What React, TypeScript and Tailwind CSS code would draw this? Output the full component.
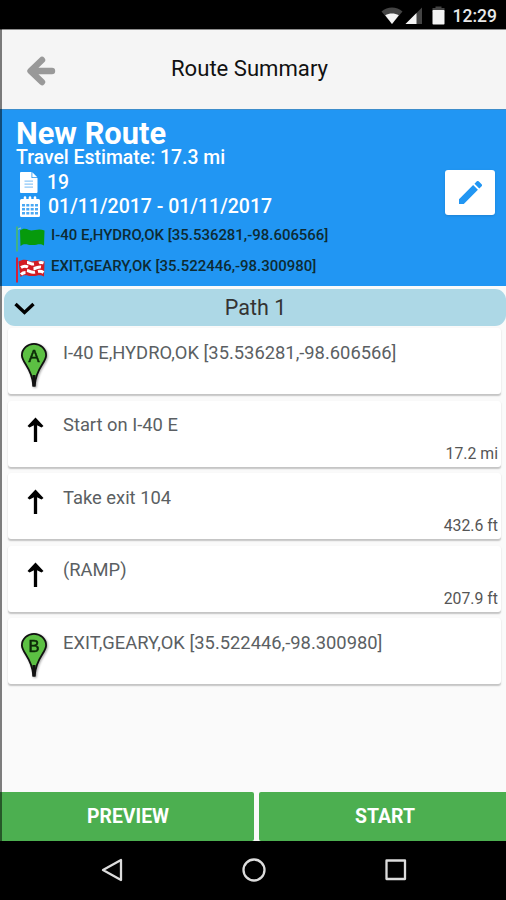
import React from 'react';

interface Step {
  kind: 'marker' | 'straight';
  label?: string;
  text: string;
  distance?: string;
}

const steps: Step[] = [
  { kind: 'marker', label: 'A', text: 'I-40 E,HYDRO,OK [35.536281,-98.606566]' },
  { kind: 'straight', text: 'Start on I-40 E', distance: '17.2 mi' },
  { kind: 'straight', text: 'Take exit 104', distance: '432.6 ft' },
  { kind: 'straight', text: '(RAMP)', distance: '207.9 ft' },
  { kind: 'marker', label: 'B', text: 'EXIT,GEARY,OK [35.522446,-98.300980]' },
];

const StatusBar: React.FC = () => (
  <div className="flex h-[29px] shrink-0 items-center justify-end bg-black pr-[9px] text-[#e8e8e8]">
    <svg className="mt-[2px] h-[18px] w-[22px]" viewBox="0 0 22 18">
      <path d="M0.5 4.5C6.5-0.8 15.5-0.8 21.5 4.5L11 17Z" fill="#444" />
      <path d="M4.2 8.2C8.4 5.8 13.6 5.8 17.8 8.2L11 17Z" fill="#f4f4f4" />
    </svg>
    <svg className="ml-[2px] mt-[2px] h-[18px] w-[18px]" viewBox="0 0 18 18">
      <path d="M17 0.5V17H0.5Z" fill="#444" />
      <path d="M11.5 6V17H0.5Z" fill="#f4f4f4" />
    </svg>
    <svg className="ml-[9px] mt-[2px] h-[19px] w-[13px]" viewBox="0 0 13 19">
      <path d="M3.5 0.5h6v1.5H12.5V6H0.5V2h3Z" fill="#444" />
      <rect x="0.5" y="4" width="12" height="14.5" rx="0.8" fill="#f4f4f4" />
    </svg>
    <span className="ml-[8px] mt-[4px] text-[17.5px] leading-none font-medium">12:29</span>
  </div>
);

const Header: React.FC = () => (
  <header className="grid h-[80px] shrink-0 grid-cols-[171px_1fr] items-center border-t border-[#8d8d8d] bg-[#f5f5f5]">
    <svg className="ml-[26px] mt-[2px] h-[30px] w-[30px]" viewBox="0 0 30 30" fill="none" stroke="#999999" strokeWidth="6.4" strokeLinecap="round" strokeLinejoin="round">
      <path d="M16 4L4.5 15L16 26M6 15H26" />
    </svg>
    <h1 className="-mt-[2px] text-[22.1px] leading-none font-normal text-[#111]">Route Summary</h1>
  </header>
);

const PageIcon: React.FC = () => (
  <svg className="h-[21px] w-[18px]" viewBox="0 0 18 21">
    <path d="M1 0h10.5v6h6V20a1 1 0 0 1-1 1H1a1 1 0 0 1-1-1V1a1 1 0 0 1 1-1Z" fill="white" />
    <path d="M12.3 0.3L17.3 5.3H12.3Z" fill="white" />
    <path d="M4.5 9.2h8.5M4.5 12.2h8.5M4.5 15.2h8.5" stroke="#8dc7f8" strokeWidth="1.3" />
  </svg>
);

const CalendarIcon: React.FC = () => (
  <svg className="h-[21px] w-[20px]" viewBox="0 0 20 21">
    <path d="M1.5 3h2.2V1.5a1.3 1.3 0 0 1 2.6 0V3h2.4V1.5a1.3 1.3 0 0 1 2.6 0V3h2.4V1.5a1.3 1.3 0 0 1 2.6 0V3h2.2a1.5 1.5 0 0 1 1.5 1.5V19.5a1.5 1.5 0 0 1-1.5 1.5H1.5A1.5 1.5 0 0 1 0 19.5V4.5A1.5 1.5 0 0 1 1.5 3Z" fill="white" />
    <g fill="#4aa8f3">
      <path d="M2 8h3v2.6H2ZM6.3 8h3v2.6h-3ZM10.700 8h3v2.600h-3ZM15 8h3v2.600h-3Z" />
      <path d="M2 12h3v2.600H2ZM6.300 12h3v2.600h-3ZM10.700 12h3v2.600h-3ZM15 12h3v2.600h-3Z" />
      <path d="M2 16h3v2.600H2ZM6.300 16h3v2.600h-3ZM10.700 16h3v2.600h-3ZM15 16h3v2.600h-3Z" />
    </g>
  </svg>
);

const StartFlag: React.FC = () => (
  <svg className="h-[28px] w-[31px]" viewBox="0 0 31 28">
    <path d="M1 1.5V26.5" stroke="#49b96b" strokeWidth="1.6" />
    <path d="M2 4.5C3 3.5 4 3 5 3.200" stroke="#b9e3a8" strokeWidth="1" fill="none" />
    <path d="M4 5.500C7 3 10 3.500 13 5C17 6.500 22 3 28.500 5.500L28 20.500C24 18 21 20 17 20C12 20.500 9 17.500 4.500 21Z" fill="#069a0c" />
  </svg>
);

const FinishFlag: React.FC = () => (
  <svg className="h-[28px] w-[31px]" viewBox="0 0 31 28">
    <path d="M1 1.5V26.5" stroke="#d4203a" strokeWidth="2" />
    <path d="M2.5 5.500C7 3 10 3.500 13 5C17 6.500 22 3 28.500 5.500L28 20.500C24 18 21 20 17 20C12 20.500 9 17.500 4.500 21Z" fill="#d21c24" />
    <g fill="none" stroke="white" strokeWidth="3">
      <path d="M11 6.500C14 6.500 15 8.500 18 8" />
      <path d="M23 7C25 6 26 6.500 27.500 7" />
      <path d="M5 11.500C8 9.500 10 10 12 11" />
      <path d="M17.500 12.500C20 12.500 22 10.500 25 11" />
      <path d="M11 14.500C14 15 15 17 19 16" />
      <path d="M5 18.500C7 16.500 8 16.500 9.500 16.500" />
      <path d="M22 15.500C24 15 26 15.500 27.500 16.500" />
    </g>
  </svg>
);

const Marker: React.FC<{ label: string }> = ({ label }) => (
  <svg className="mt-[14px] h-[46px] w-[30px] drop-shadow-[1px_1px_1px_rgba(0,0,0,0.35)]" viewBox="0 0 30 46">
    <path d="M15 1.800C8.500 1.800 2.900 6.700 2.900 13.300C2.900 21 13 25.500 14.300 43.500H15.700C17 25.500 27.100 21 27.100 13.300C27.100 6.700 21.500 1.800 15 1.800Z" fill="#5cc043" stroke="#111" strokeWidth="1.800" />
    <path d="M15 33V44.500" stroke="#111" strokeWidth="3" />
    <text x="15" y="19.500" textAnchor="middle" fontSize="16.500" fill="#0c2a08" stroke="#0c2a08" strokeWidth="0.600" fontFamily="'Liberation Sans', sans-serif">{label}</text>
  </svg>
);

const StraightArrow: React.FC = () => (
  <svg className="mt-[16px] ml-[8px] h-[26px] w-[18px]" viewBox="0 0 18 26">
    <path d="M8.500 25V3" stroke="#000" strokeWidth="3.300" />
    <path d="M8.500 0.500L16.500 9L14.500 10.500L8.500 7.500L2.500 10.500L0.500 9Z" fill="#000" />
  </svg>
);

const RouteInfo: React.FC = () => (
  <section className="flex h-[177px] shrink-0 flex-col border-t border-[#3d8dcb] bg-[#2196f3] pl-[16px] text-white">
    <div className="flex h-[108px]">
      <div className="flex-1 pt-[8px]">
        <h2 className="text-[30.8px] leading-[31px] font-bold">New Route</h2>
        <p className="-mt-[1px] text-[19.4px] leading-[20px] font-medium">Travel Estimate: 17.3 mi</p>
        <div className="ml-[4px] mt-[2px] flex h-[24px] items-center text-[19.4px] font-medium">
          <PageIcon />
          <span className="mt-[1px] ml-[9px]">19</span>
        </div>
        <div className="ml-[4px] flex h-[25px] items-center text-[19.5px] font-medium">
          <CalendarIcon />
          <span className="mt-[1px] ml-[8px]">01/11/2017 - 01/11/2017</span>
        </div>
      </div>
      <button className="mt-[60px] mr-[11px] flex h-[45px] w-[50px] items-center justify-center rounded-[3px] bg-white shadow-sm">
        <svg className="h-[23px] w-[23px]" viewBox="3 3 18 18" fill="#2196f3">
          <path d="M3 17.25V21h3.75L17.81 9.94l-3.75-3.75L3 17.25ZM20.71 7.04a1 1 0 0 0 0-1.41l-2.34-2.34a1 1 0 0 0-1.41 0l-1.83 1.83 3.75 3.75 1.83-1.83Z" />
        </svg>
      </button>
    </div>
    <div className="mt-[7px] flex h-[31px] items-start text-[14.95px] leading-[21px] font-medium text-[#0d2b33]">
      <StartFlag />
      <span className="ml-[4px]">I-40 E,HYDRO,OK [35.536281,-98.606566]</span>
    </div>
    <div className="flex h-[30px] items-start text-[14.95px] leading-[21px] font-medium text-[#0d2b33]">
      <FinishFlag />
      <span className="ml-[4px]">EXIT,GEARY,OK [35.522446,-98.300980]</span>
    </div>
  </section>
);

const StepCard: React.FC<{ step: Step }> = ({ step }) => (
  <li className="flex h-[66px] rounded-[3px] bg-white shadow-[0_1.5px_1.5px_rgba(0,0,0,0.22)]">
    <div className="w-[55px] shrink-0 pl-[11px]">
      {step.kind === 'marker' ? <Marker label={step.label || ''} /> : <StraightArrow />}
    </div>
    <div className="flex flex-1 flex-col justify-between pt-[13.5px] pr-[3px] pb-[4px]">
      <p className="text-[18.35px] leading-[22px] text-[#5b5f63]">{step.text}</p>
      {step.distance && <p className="text-right text-[15.8px] leading-[18px] text-[#555]">{step.distance}</p>}
    </div>
  </li>
);

const App: React.FC = () => {
  return (
    <div className="relative flex h-[900px] w-[506px] flex-col overflow-hidden bg-[#fafafa] font-['Roboto',sans-serif]">
      <StatusBar />
      <Header />
      <RouteInfo />

      <main className="flex-1 pt-[3px]">
        <button className="ml-[4px] grid h-[37px] w-[502px] grid-cols-[42px_1fr_42px] items-center rounded-[11px] bg-[#add8e6] text-[21.5px] text-[#333]">
          <svg className="ml-[10px] mt-[3px] h-[14px] w-[21px]" viewBox="0 0 21 14" fill="none" stroke="#000" strokeWidth="3.4">
            <path d="M1.5 2L10.5 10.5L19.5 2" />
          </svg>
          <span className="pt-[2px] pl-[1px]">Path 1</span>
        </button>
        <ul className="mt-[2px] ml-[8px] flex w-[493px] flex-col gap-[6.5px]">
          {steps.map((step, index) => <StepCard key={index} step={step} />)}
        </ul>
      </main>

      <div className="grid h-[49px] shrink-0 grid-cols-[254px_247px] gap-[5px] bg-[#fafafa]">
        <button className="rounded-r-[2px] bg-[#4caf50] pl-[2px] text-[19.4px] font-bold text-white">PREVIEW</button>
        <button className="rounded-l-[2px] bg-[#4caf50] pl-[5px] text-[19.4px] font-bold text-white">START</button>
      </div>

      <nav className="flex h-[59px] shrink-0 items-center bg-black">
        <svg className="ml-[101px] -mt-[2px] h-[24px] w-[22px]" viewBox="0 0 22 24" fill="none" stroke="#dcdcdc" strokeWidth="2.3" strokeLinejoin="round">
          <path d="M20 2V22L2 12Z" />
        </svg>
        <svg className="ml-[119px] -mt-[2px] h-[24px] w-[24px]" viewBox="0 0 24 24" fill="none" stroke="#dcdcdc" strokeWidth="2.3">
          <circle cx="12" cy="12" r="10.5" />
        </svg>
        <svg className="ml-[119px] -mt-[2px] h-[22px] w-[22px]" viewBox="0 0 22 22" fill="none" stroke="#dcdcdc" strokeWidth="2.3" strokeLinejoin="round">
          <rect x="1.5" y="1.5" width="18.5" height="18.5" />
        </svg>
      </nav>

      {/* screen edge */}
      <div className="absolute top-[29px] left-0 h-[871px] w-[2px] bg-black/50" />
    </div>
  );
};

export default App;
